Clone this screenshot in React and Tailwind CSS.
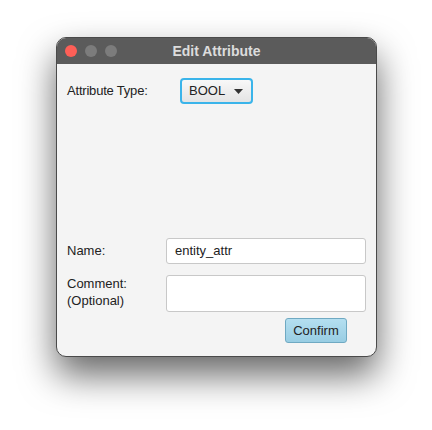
export default function App() {
  return (
    <div className="h-[430px] w-[432px] bg-white pl-[56px] pt-[37px] font-['Liberation_Sans',Arial,sans-serif]">
      <div className="flex h-[320px] w-[321px] flex-col overflow-hidden rounded-[10px] border border-[#4a4a4a] bg-[#f4f4f4] shadow-[0_18px_36px_rgba(0,0,0,0.6)]">
        <div className="relative flex h-[26px] shrink-0 items-center bg-[#5b5b5b] pl-[8px]">
          <div className="flex gap-[8px]">
            <span className="h-[12px] w-[12px] rounded-full bg-[#fe5f57]" />
            <span className="h-[12px] w-[12px] rounded-full bg-[#7c7c7c]" />
            <span className="h-[12px] w-[12px] rounded-full bg-[#7c7c7c]" />
          </div>
          <div className="absolute inset-0 flex items-center justify-center text-[14px] font-bold text-[#dcdcdc]">
            Edit Attribute
          </div>
        </div>
        <div className="flex flex-1 flex-col px-[10px] pt-[14px]">
          <div className="flex items-center">
            <span className="w-[113px] text-[13px] tracking-[-0.2px] text-[#222]">Attribute Type:</span>
            <button className="flex h-[26px] w-[73px] items-center justify-between rounded-[4px] border-2 border-[#3ab4ea] bg-gradient-to-b from-[#f8f8f8] to-[#e4e4e4] pl-[7px] pr-[8px] text-[13px] text-[#222]">
              <span>BOOL</span>
              <svg width="9" height="5" viewBox="0 0 9 5">
                <path d="M0 0h9L4.5 5z" fill="#333" />
              </svg>
            </button>
          </div>
          <div className="mt-[134px] flex items-center">
            <span className="w-[99px] text-[13px] text-[#222]">Name:</span>
            <div className="flex h-[26px] w-[200px] items-center rounded-[3px] border border-[#c8c8c8] bg-white px-[8px] text-[13px] text-[#222]">
              entity_attr
            </div>
          </div>
          <div className="mt-[11px] flex items-start">
            <span className="w-[99px] text-[13px] leading-[17px] text-[#222]">
              Comment:
              <br />
              (Optional)
            </span>
            <div className="h-[37px] w-[200px] rounded-[3px] border border-[#c8c8c8] bg-white" />
          </div>
          <div className="mt-[6px] flex justify-end pr-[19px]">
            <button className="h-[25px] w-[62px] rounded-[3px] border border-[#6fa9c2] bg-gradient-to-b from-[#b4dff0] to-[#98cde3] text-[13px] text-[#222]">
              Confirm
            </button>
          </div>
        </div>
      </div>
    </div>
  );
}
